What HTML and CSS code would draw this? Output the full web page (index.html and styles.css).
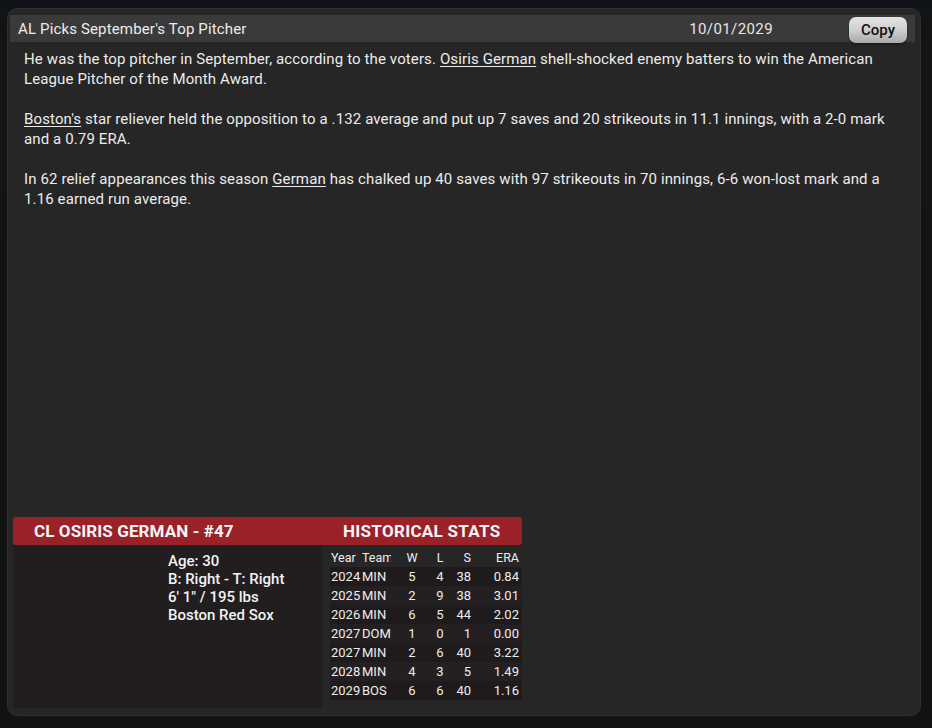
FILE: index.html
```html
<!DOCTYPE html>
<html>
<head>
<meta charset="utf-8">
<link rel="stylesheet" href="styles.css">
</head>
<body>
<div class="panel">
  <div class="titlebar">
    <div class="title">AL Picks September's Top Pitcher</div>
    <div class="date">10/01/2029</div>
    <button class="copy">Copy</button>
  </div>
  <div class="content">
    <p>He was the top pitcher in September, according to the voters. <span class="link">Osiris German</span> shell-shocked enemy batters to win the American League Pitcher of the Month Award.</p>
    <p><span class="link">Boston's</span> star reliever held the opposition to a .132 average and put up 7 saves and 20 strikeouts in 11.1 innings, with a 2-0 mark and a 0.79 ERA.</p>
    <p>In 62 relief appearances this season <span class="link">German</span> has chalked up 40 saves with 97 strikeouts in 70 innings, 6-6 won-lost mark and a 1.16 earned run average.</p>
  </div>
  <div class="card">
    <div class="card-head">
      <div class="head-name">CL OSIRIS GERMAN - #47</div>
      <div class="head-stats">HISTORICAL STATS</div>
    </div>
    <div class="card-body">
      <div class="info">
        <div>Age: 30</div>
        <div>B: Right - T: Right</div>
        <div>6' 1" / 195 lbs</div>
        <div>Boston Red Sox</div>
      </div>
      <div class="stats">
        <div class="row hdr"><span class="c-year">Year</span><span class="c-team">Team</span><span class="c-w">W</span><span class="c-l">L</span><span class="c-s">S</span><span class="c-era">ERA</span></div>
        <div class="row odd"><span class="c-year">2024</span><span class="c-team">MIN</span><span class="c-w">5</span><span class="c-l">4</span><span class="c-s">38</span><span class="c-era">0.84</span></div>
        <div class="row even"><span class="c-year">2025</span><span class="c-team">MIN</span><span class="c-w">2</span><span class="c-l">9</span><span class="c-s">38</span><span class="c-era">3.01</span></div>
        <div class="row odd"><span class="c-year">2026</span><span class="c-team">MIN</span><span class="c-w">6</span><span class="c-l">5</span><span class="c-s">44</span><span class="c-era">2.02</span></div>
        <div class="row even"><span class="c-year">2027</span><span class="c-team">DOM</span><span class="c-w">1</span><span class="c-l">0</span><span class="c-s">1</span><span class="c-era">0.00</span></div>
        <div class="row odd"><span class="c-year">2027</span><span class="c-team">MIN</span><span class="c-w">2</span><span class="c-l">6</span><span class="c-s">40</span><span class="c-era">3.22</span></div>
        <div class="row even"><span class="c-year">2028</span><span class="c-team">MIN</span><span class="c-w">4</span><span class="c-l">3</span><span class="c-s">5</span><span class="c-era">1.49</span></div>
        <div class="row odd"><span class="c-year">2029</span><span class="c-team">BOS</span><span class="c-w">6</span><span class="c-l">6</span><span class="c-s">40</span><span class="c-era">1.16</span></div>
      </div>
    </div>
  </div>
</div>
</body>
</html>
```
FILE: styles.css
```css
* { box-sizing: border-box; }
html, body { margin: 0; padding: 0; }
body {
  width: 932px;
  height: 728px;
  overflow: hidden;
  background: linear-gradient(to bottom, #0e1217 0px, #121316 10px, #141414 60px, #121212 100%);
  font-family: Roboto, "Liberation Sans", sans-serif;
  padding: 8px 11px 12px 7px;
}
.panel {
  width: 914px;
  height: 708px;
  border-radius: 10px;
  background: #262626;
  border: 1px solid #2f2f2f;
  padding: 6px 5px 7px 2px;
  display: flex;
  flex-direction: column;
}
.titlebar {
  height: 27px;
  background: #3a3a3a;
  display: flex;
  align-items: center;
  padding-left: 8px;
  padding-right: 8px;
  flex: none;
}
.title {
  flex: 1;
  color: #ececec;
  font-size: 15px;
  letter-spacing: 0.15px;
}
.date {
  color: #e6e6e6;
  font-size: 15px;
  letter-spacing: 0.4px;
  margin-right: 76px;
}
.copy {
  width: 58px;
  height: 26px;
  margin-top: 3px;
  border: none;
  border-radius: 7px;
  background: linear-gradient(to bottom, #e4e4e4 0%, #cfcfcf 50%, #a9a9a9 100%);
  color: #111;
  font-family: Roboto, "Liberation Sans", sans-serif;
  font-size: 15px;
  font-weight: 500;
  padding: 0;
  box-shadow: 0 1px 2px rgba(0,0,0,0.5);
}
.content {
  padding: 7px 0 0 14px;
  color: #ececec;
  font-size: 15px;
  letter-spacing: 0.12px;
  line-height: 20px;
}
.content p {
  margin: 0 0 20px 0;
  width: 880px;
}
.link { text-decoration: underline; text-underline-offset: 2px; }
.card {
  margin-top: auto;
  margin-left: 3px;
  width: 509px;
  display: flex;
  flex-direction: column;
}
.card-head {
  height: 28px;
  background: #9b2129;
  border-radius: 3px;
  display: flex;
  align-items: center;
  color: #f4f4f4;
  font-weight: 700;
  font-size: 17px;
}
.head-name { width: 317px; padding-left: 21px; letter-spacing: 0.1px; }
.head-stats { padding-left: 13px; letter-spacing: 0.3px; }
.card-body {
  display: flex;
  height: 163px;
}
.info {
  width: 309px;
  background: #221e1f;
  padding: 7px 0 0 155px;
  color: #f2f2f2;
  font-size: 15px;
  font-weight: 500;
  line-height: 18px;
}
.stats {
  margin-left: 8px;
  width: 192px;
  padding-top: 3px;
  font-size: 13px;
  color: #ededed;
}
.row {
  display: grid;
  grid-template-columns: 32px 29px 42px 14px 24px 1fr;
  height: 19px;
  align-items: center;
  line-height: 19px;
}
.row span { white-space: nowrap; overflow: hidden; }
.hdr { font-size: 12.5px; }
.odd { background: #1f1b1c; }
.even { background: #242021; }
.c-year { padding-left: 1px; }
.c-team { overflow: hidden; }
.c-w, .c-l { text-align: center; overflow: visible !important; }
.c-s { text-align: right; }
.c-era { text-align: right; padding-right: 3px; }
```
